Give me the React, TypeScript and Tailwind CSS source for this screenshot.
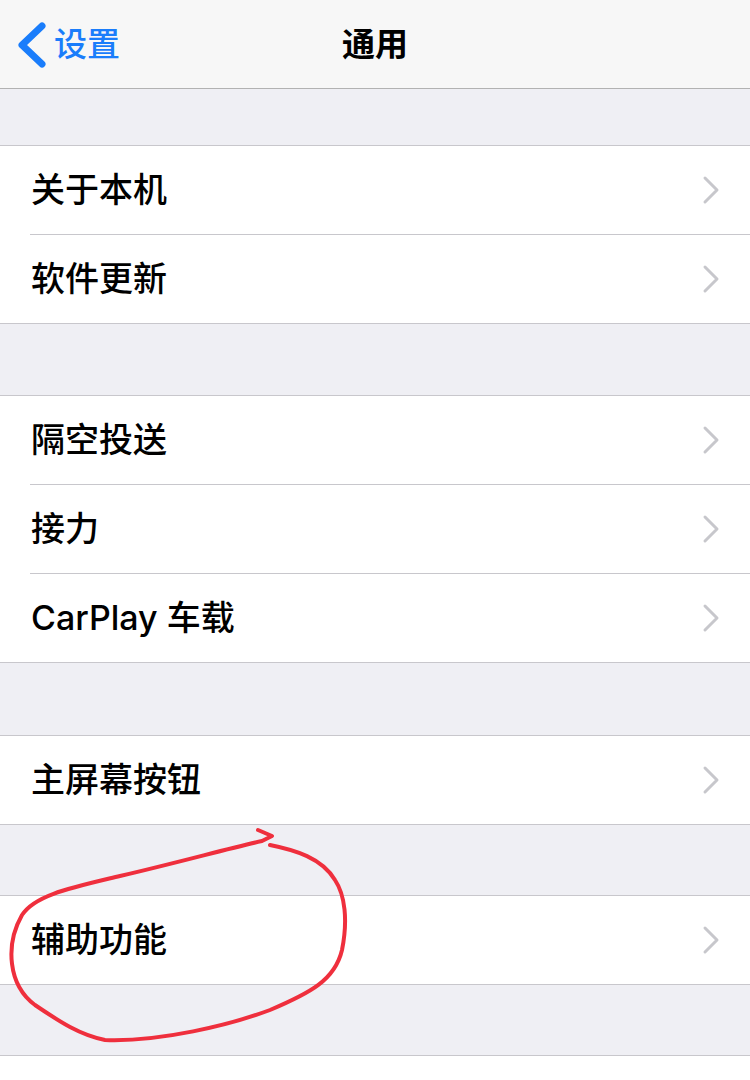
import React from "react";

const font = { fontFamily: 'Inter, "Noto Sans CJK SC", "Noto Sans", sans-serif' };

function Chevron() {
  return (
    <svg width="20" height="30" viewBox="0 0 20 30" className="shrink-0">
      <path d="M5 3 L17 15 L5 27" fill="none" stroke="#c7c7cc" strokeWidth="3" strokeLinecap="round" strokeLinejoin="round" />
    </svg>
  );
}

function Row({ label, last }: { label: string; last?: boolean }) {
  return (
    <div className="bg-white">
      <div className="h-[88px] flex items-center justify-between pl-[31px] pr-[30px]">
        <span className="text-[34px] font-medium text-black leading-none">{label}</span>
        <Chevron />
      </div>
      {!last && <div className="ml-[30px] h-px bg-[#c8c7cc]" />}
    </div>
  );
}

function Group({ items }: { items: string[] }) {
  return (
    <div className="border-t border-b border-[#c8c7cc]">
      {items.map((t, i) => (
        <Row key={t} label={t} last={i === items.length - 1} />
      ))}
    </div>
  );
}

export default function App() {
  return (
    <div className="relative w-[750px] h-[1080px] bg-white overflow-hidden" style={font}>
      <div className="h-[89px] bg-[#f7f7f7] border-b border-[#b2b2b2] relative flex items-center">
        <div className="flex items-center pl-[16px]">
          <svg width="32" height="48" viewBox="0 0 32 48">
            <path d="M26 6 L6 25 L26 44" fill="none" stroke="#1a7dfb" strokeWidth="7" strokeLinecap="round" strokeLinejoin="round" />
          </svg>
          <span className="ml-[6px] text-[33px] font-medium text-[#1a7dfb] leading-none">设置</span>
        </div>
        <div className="absolute left-0 right-0 top-0 h-[88px] flex items-center justify-center">
          <span className="text-[33px] font-semibold text-black leading-none">通用</span>
        </div>
      </div>
      <div className="bg-[#efeff4]">
        <div className="h-[56px]" />
        <Group items={["关于本机", "软件更新"]} />
        <div className="h-[71px]" />
        <Group items={["隔空投送", "接力", "CarPlay 车载"]} />
        <div className="h-[72px]" />
        <Group items={["主屏幕按钮"]} />
        <div className="h-[70px]" />
        <Group items={["辅助功能"]} />
        <div className="h-[70px]" />
        <div className="border-t border-[#c8c7cc] bg-white h-[40px]" />
      </div>
      <svg className="absolute top-0 left-0 pointer-events-none" width="750" height="1080" viewBox="0 0 750 1080">
        <path
          d="M258 830 L272 836 L262 841 C230 848 180 862 120 876 C70 888 35 895 22 915 C5 945 8 985 35 1005 C60 1022 80 1035 105 1040 C160 1042 230 1025 270 1010 C310 993 335 980 342 950 C348 920 345 895 335 880 C322 858 295 850 270 845"
          fill="none"
          stroke="#ef2f3d"
          strokeWidth="4"
          strokeLinecap="round"
          strokeLinejoin="round"
        />
      </svg>
    </div>
  );
}
